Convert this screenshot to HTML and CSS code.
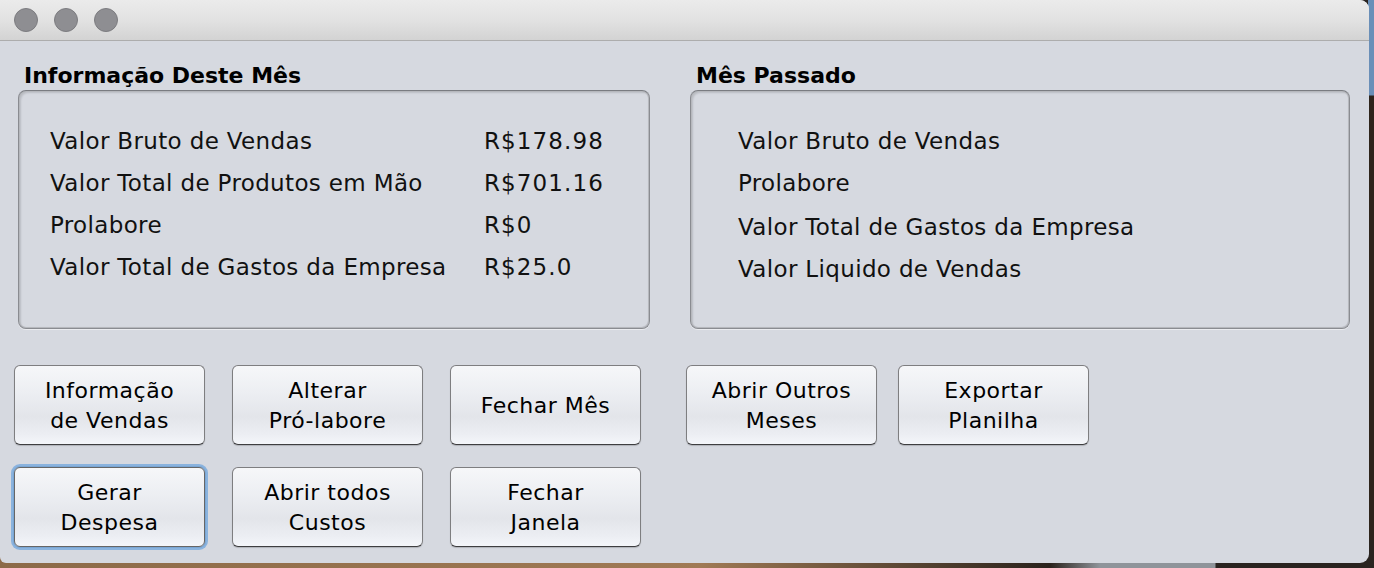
FILE: index.html
```html
<!DOCTYPE html>
<html lang="pt">
<head>
<meta charset="utf-8">
<title>Informação Deste Mês</title>
<link rel="stylesheet" href="styles.css">
</head>
<body>
<div class="desktop">
  <div class="window">
    <div class="titlebar">
      <span class="light"></span>
      <span class="light"></span>
      <span class="light"></span>
    </div>
    <div class="content">
      <div class="panels">
        <section class="group left">
          <h2 class="group-title">Informação Deste Mês</h2>
          <div class="box">
            <div class="row"><span class="label">Valor Bruto de Vendas</span><span class="value">R$178.98</span></div>
            <div class="row"><span class="label">Valor Total de Produtos em Mão</span><span class="value">R$701.16</span></div>
            <div class="row"><span class="label">Prolabore</span><span class="value">R$0</span></div>
            <div class="row"><span class="label">Valor Total de Gastos da Empresa</span><span class="value">R$25.0</span></div>
          </div>
        </section>
        <section class="group right">
          <h2 class="group-title">Mês Passado</h2>
          <div class="box box-right">
            <div class="row"><span class="label">Valor Bruto de Vendas</span></div>
            <div class="row"><span class="label">Prolabore</span></div>
            <div class="row row-tall"><span class="label">Valor Total de Gastos da Empresa</span></div>
            <div class="row"><span class="label">Valor Liquido de Vendas</span></div>
          </div>
        </section>
      </div>
      <div class="buttons">
        <div class="btn-row">
          <button class="btn">Informação<br>de Vendas</button>
          <button class="btn">Alterar<br>Pró-labore</button>
          <button class="btn">Fechar Mês</button>
          <button class="btn btn-gap">Abrir Outros<br>Meses</button>
          <button class="btn btn-near">Exportar<br>Planilha</button>
        </div>
        <div class="btn-row">
          <button class="btn focused">Gerar<br>Despesa</button>
          <button class="btn">Abrir todos<br>Custos</button>
          <button class="btn">Fechar<br>Janela</button>
        </div>
      </div>
    </div>
  </div>
</div>
</body>
</html>
```
FILE: styles.css
```css
html, body {
  margin: 0;
  padding: 0;
}
body {
  width: 1374px;
  height: 568px;
  overflow: hidden;
  font-family: "DejaVu Sans", "Liberation Sans", sans-serif;
  background: #3a2a20;
}
.desktop {
  width: 1374px;
  height: 568px;
  background:
    linear-gradient(to right, #8c6a48 0, #a07a55 700px, #2a221c 1050px, #8f949a 1100px, #8f949a 1215px, #2a2420 1216px, #2a2420 100%);
  position: relative;
}
.desktop::after {
  content: "";
  position: absolute;
  right: 0;
  top: 0;
  width: 6px;
  height: 540px;
  background: linear-gradient(to bottom, #6a8fb8 0, #6a8fb8 95px, #2e241c 96px, #2e241c 100%);
}
.window {
  position: relative;
  z-index: 1;
  width: 1369px;
  height: 563px;
  background: #d6d9e0;
  border-radius: 0 9px 9px 6px;
  overflow: hidden;
  display: flex;
  flex-direction: column;
}
.titlebar {
  height: 40px;
  flex: none;
  background: linear-gradient(to bottom, #ebebeb 0%, #e2e2e2 50%, #d3d3d3 100%);
  border-bottom: 1px solid #adadad;
  display: flex;
  align-items: center;
  gap: 16px;
  padding-left: 14px;
  box-sizing: content-box;
}
.light {
  width: 22px;
  height: 22px;
  border-radius: 50%;
  background: #8e8e92;
  border: 1px solid #7c7c80;
}
.content {
  padding: 22px 0 0 0;
}
.panels {
  display: flex;
  padding-left: 18px;
  gap: 40px;
}
.group-title {
  margin: 0 0 1px 6px;
  font-size: 22px;
  font-weight: bold;
  line-height: 26px;
  color: #000;
}
.box {
  box-sizing: border-box;
  height: 239px;
  border: 1px solid #8a8c91;
  border-top-color: #7a7c81;
  border-radius: 8px;
  box-shadow: inset 0 0 0 1px #b6b8bd, inset 2px 2px 2px rgba(0, 0, 0, 0.13), inset -1px -1px 1px rgba(0, 0, 0, 0.08), 0 1px 0 rgba(255,255,255,0.5);
  padding: 29px 0 0 31px;
}
.left .box { width: 632px; }
.right .box { width: 660px; padding-left: 47px; }
.row {
  display: flex;
  height: 42px;
  align-items: center;
  font-size: 23px;
  color: #111;
}
.row-tall { margin-top: 2px; }
.label {
  width: 434px;
  white-space: nowrap;
  letter-spacing: 0.35px;
}
.value {
  white-space: nowrap;
  letter-spacing: 1.1px;
}
.buttons {
  padding: 36px 0 0 14px;
  display: flex;
  flex-direction: column;
  gap: 22px;
}
.btn-row {
  display: flex;
  gap: 27px;
}
.btn {
  width: 191px;
  height: 80px;
  margin: 0;
  padding: 2px 0 0 0;
  box-sizing: border-box;
  font-family: "DejaVu Sans", "Liberation Sans", sans-serif;
  font-size: 22px;
  line-height: 30px;
  color: #000;
  letter-spacing: 0.5px;
  text-align: center;
  border: 1px solid #7e7e80;
  border-bottom-color: #3e3e40;
  border-radius: 6px;
  background: linear-gradient(to bottom, #f6f7f9 0%, #eceef2 35%, #e3e5ea 65%, #eceef3 88%, #f4f6fa 100%);
  box-shadow: 0 1px 1px rgba(0, 0, 0, 0.18);
}
.btn-gap { margin-left: 18px; }
.btn-near { margin-left: -6px; }
.focused {
  box-shadow: 0 0 0 1px #7aa6d4, 0 0 0 3px #8ab3de;
  border-color: #666;
}
```
